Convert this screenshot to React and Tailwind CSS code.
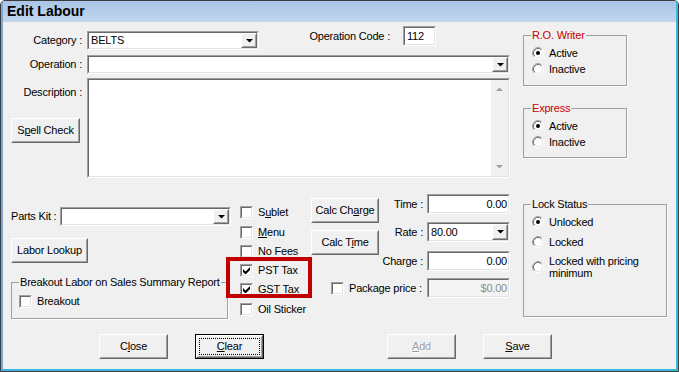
const FONT = "font-['Liberation_Sans',Arial,sans-serif]";

const Sunken = ({ className = "", inner = "", children }) => (
  <div className={`border border-t-[#a0a0a0] border-l-[#a0a0a0] border-r-white border-b-white ${className}`}>
    <div className={`h-full w-full border border-t-[#696969] border-l-[#696969] border-r-[#e3e3e3] border-b-[#e3e3e3] ${inner}`}>
      {children}
    </div>
  </div>
);

const Raised = ({ className = "", inner = "", children }) => (
  <div className={`border border-t-white border-l-white border-r-[#696969] border-b-[#696969] bg-[#f0f0f0] ${className}`}>
    <div className={`h-full w-full border border-t-[#f0f0f0] border-l-[#f0f0f0] border-r-[#a0a0a0] border-b-[#a0a0a0] ${inner}`}>
      {children}
    </div>
  </div>
);

const Button = ({ className = "", disabled, children }) => (
  <Raised
    className={`shrink-0 ${className}`}
    inner={`flex items-center justify-center ${disabled ? "text-[#a0a0a0] [text-shadow:1px_1px_0_#fff]" : ""}`}
  >
    <span>{children}</span>
  </Raised>
);

const Arrow = ({ up, color = "#000" }) => (
  <svg width="7" height="4" viewBox="0 0 7 4" className="shrink-0">
    <path d={up ? "M0 4h7L3.5 0.5z" : "M0 0h7L3.5 3.5z"} fill={color} />
  </svg>
);

const Combo = ({ className = "", value }) => (
  <Sunken className={`shrink-0 ${className}`} inner="flex bg-white">
    <div className="flex flex-1 items-center pl-[2px]">{value}</div>
    <Raised className="h-full w-[16px]" inner="flex items-center justify-center">
      <Arrow />
    </Raised>
  </Sunken>
);

const TextBox = ({ className = "", value, left, gray }) => (
  <Sunken
    className={`shrink-0 ${className}`}
    inner={`flex items-center ${left ? "pl-[2px]" : "justify-end pr-[1px]"} ${gray ? "bg-[#f4f4f4] text-[#8c8c8c]" : "bg-white"}`}
  >
    {value}
  </Sunken>
);

const Check = ({ on }) => (
  <Sunken className="h-[13px] w-[13px] shrink-0" inner="flex items-center justify-center bg-white">
    {on && (
      <svg width="7" height="7" viewBox="0 0 7 7">
        <path d="M0 2L2.5 4.5L7 0V3L3 7H2L0 5Z" fill="black" />
      </svg>
    )}
  </Sunken>
);

const CheckRow = ({ className = "", on, label }) => (
  <div className={`flex items-center gap-[5px] ${className}`}>
    <Check on={on} />
    <span className="whitespace-nowrap">{label}</span>
  </div>
);

const Radio = ({ on }) => (
  <svg width="12" height="12" viewBox="0 0 12 12" className="shrink-0">
    <circle cx="6" cy="6" r="5" fill="white" />
    <path d="M2.11 9.89A5.5 5.5 0 0 1 9.89 2.11" fill="none" stroke="#a0a0a0" />
    <path d="M9.89 2.11A5.5 5.5 0 0 1 2.11 9.89" fill="none" stroke="#ffffff" />
    <path d="M2.82 9.18A4.5 4.5 0 0 1 9.18 2.82" fill="none" stroke="#696969" />
    <path d="M9.18 2.82A4.5 4.5 0 0 1 2.82 9.18" fill="none" stroke="#e3e3e3" />
    {on && <circle cx="6" cy="6" r="2" fill="black" />}
  </svg>
);

const RadioRow = ({ className = "", on, label }) => (
  <div className={`flex h-[16px] items-center gap-[5px] ${className}`}>
    <Radio on={on} />
    <span>{label}</span>
  </div>
);

const Group = ({ title, red, className = "", body = "pt-[9px] pl-[8px]", children }) => (
  <div className={`relative shrink-0 border border-[#a0a0a0] shadow-[1px_1px_0_#fff] ${className}`}>
    <span
      className={`absolute -top-[7px] left-[7px] whitespace-nowrap bg-[#f0f0f0] px-[1px] leading-[13px] ${red ? "text-[#c80000]" : ""}`}
    >
      {title}
    </span>
    <div className={`flex flex-col ${body}`}>{children}</div>
  </div>
);

const Field = ({ className = "", label, value }) => (
  <div className={`flex h-[20px] items-center justify-end gap-[4px] ${className}`}>
    <span className="whitespace-nowrap">{label}</span>
    <TextBox className="h-[20px] w-[83px]" value={value} />
  </div>
);

export default function App() {
  return (
    <div
      className={`h-[372px] w-[679px] overflow-hidden rounded-t-[5px] border border-[#3b3b3b] bg-[#f0f0f0] text-[11px] leading-[13px] tracking-[-0.2px] text-black ${FONT}`}
    >
      <div className="flex h-full flex-col border-b-2 border-l-2 border-r-2 border-b-[#3cb8e4] border-l-[#7fa8d8] border-r-[#3cb8e4]">
        <div className="h-[21px] shrink-0 bg-linear-to-b from-[#a9c5e6] to-[#c2d6ed] pl-[4px] text-[14px] font-bold leading-[21px] tracking-normal">
          Edit Labour
        </div>

        <div className="flex flex-col pl-[8px] pt-[4px]">
          {/* top section */}
          <div className="flex h-[152px]">
            <div className="flex w-[499px] flex-col">
              <div className="flex h-[29px] items-start">
                <div className="mt-[5px] flex items-center">
                  <span className="w-[76px] pr-[5px] text-right">Category :</span>
                  <Combo className="h-[19px] w-[172px]" value="BELTS" />
                </div>
                <div className="flex items-center">
                  <span className="w-[144px] pr-[13px] text-right">Operation Code :</span>
                  <TextBox className="h-[20px] w-[33px]" left value="112" />
                </div>
              </div>

              <div className="flex items-center">
                <span className="w-[76px] pr-[5px] text-right">Operation :</span>
                <Combo className="h-[19px] w-[423px]" />
              </div>

              <div className="mt-[4px] flex items-start">
                <div className="flex w-[76px] flex-col">
                  <span className="mt-[8px] pr-[5px] text-right">Description :</span>
                  <Button className="mt-[19px] h-[25px] w-[69px]">
                    S<u>p</u>ell Check
                  </Button>
                </div>
                <Sunken className="h-[100px] w-[423px]" inner="flex justify-end bg-white">
                  <div className="flex h-full w-[17px] flex-col items-center justify-between bg-[#f0f0f0] py-[7px]">
                    <Arrow up color="#a0a0a0" />
                    <Arrow color="#a0a0a0" />
                  </div>
                </Sunken>
              </div>
            </div>

            <div className="ml-[13px] flex w-[104px] flex-col">
              <Group title="R.O. Writer" red className="mt-[9px] h-[51px]">
                <RadioRow on label="Active" />
                <RadioRow label="Inactive" />
              </Group>
              <Group title="Express" red className="mt-[22px] h-[50px]">
                <RadioRow on label="Active" />
                <RadioRow label="Inactive" />
              </Group>
            </div>
          </div>

          {/* bottom section */}
          <div className="mt-[16px] flex h-[125px] items-start">
            <div className="flex w-[220px] flex-col">
              <div className="mt-[13px] flex items-center">
                <span className="w-[49px]">Parts Kit :</span>
                <Combo className="h-[19px] w-[171px]" />
              </div>
              <Button className="mt-[12px] h-[25px] w-[77px]">Labor Lookup</Button>
              <Group
                title="Breakout Labor on Sales Summary Report"
                className="mt-[19px] h-[37px] w-[217px]"
                body="pt-[10px] pl-[7px]"
              >
                <CheckRow className="h-[16px]" label="Breakout" />
              </Group>
            </div>

            <div className="ml-[9px] mt-[8px] flex w-[71px] flex-col">
              <CheckRow className="h-[20px]" label={<>S<u>u</u>blet</>} />
              <CheckRow className="h-[20px]" label={<><u>M</u>enu</>} />
              <CheckRow className="h-[19px]" label="No Fees" />
              <div className="relative">
                <CheckRow className="h-[19px]" on label="PST Tax" />
                <CheckRow className="h-[19px]" on label="GST Tax" />
                <div className="absolute -left-[14px] -right-[1px] -top-[4px] bottom-[1px] border-4 border-[#c00000]" />
              </div>
              <CheckRow className="h-[20px]" label="Oil Sticker" />
            </div>

            <div className="flex w-[199px] flex-col">
              <div className="flex">
                <div className="flex w-[68px] flex-col">
                  <Button className="mt-[4px] h-[25px] w-[68px]">
                    Calc Ch<u>a</u>rge
                  </Button>
                  <Button className="mt-[7px] h-[25px] w-[68px]">
                    Calc T<u>i</u>me
                  </Button>
                </div>
                <div className="flex flex-1 flex-col">
                  <Field label="Time :" value="0.00" />
                  <div className="mt-[8px] flex h-[20px] items-center justify-end gap-[4px]">
                    <span>Rate :</span>
                    <Combo className="h-[20px] w-[83px]" value="80.00" />
                  </div>
                  <Field className="mt-[9px]" label="Charge :" value="0.00" />
                </div>
              </div>
              <div className="mt-[7px] flex h-[20px] items-center pl-[20px]">
                <Check />
                <span className="ml-[5px] whitespace-nowrap">Package price :</span>
                <TextBox className="ml-auto h-[20px] w-[83px]" value="$0.00" gray />
              </div>
            </div>

            <div className="ml-[13px] w-[144px]">
              <Group title="Lock Status" className="mt-[10px] h-[113px] w-[144px]">
                <RadioRow on label="Unlocked" />
                <RadioRow className="mt-[4px]" label="Locked" />
                <div className="mt-[5px] flex items-center gap-[5px]">
                  <Radio />
                  <span className="leading-[12px]">
                    Locked with pricing
                    <br />
                    minimum
                  </span>
                </div>
              </Group>
            </div>
          </div>

          {/* dialog buttons */}
          <div className="mt-[15px] flex">
            <Button className="ml-[88px] h-[25px] w-[69px]">
              C<u>l</u>ose
            </Button>
            <div className="ml-[27px] h-[25px] w-[69px] shrink-0 border border-black">
              <Raised className="h-full w-full" inner="p-[1px]">
                <div className="flex h-full w-full items-center justify-center border border-dotted border-black">
                  <span>
                    <u>C</u>lear
                  </span>
                </div>
              </Raised>
            </div>
            <Button className="ml-[123px] h-[25px] w-[69px]" disabled>
              <u>A</u>dd
            </Button>
            <Button className="ml-[27px] h-[25px] w-[69px]">
              <u>S</u>ave
            </Button>
          </div>
        </div>
      </div>
    </div>
  );
}
